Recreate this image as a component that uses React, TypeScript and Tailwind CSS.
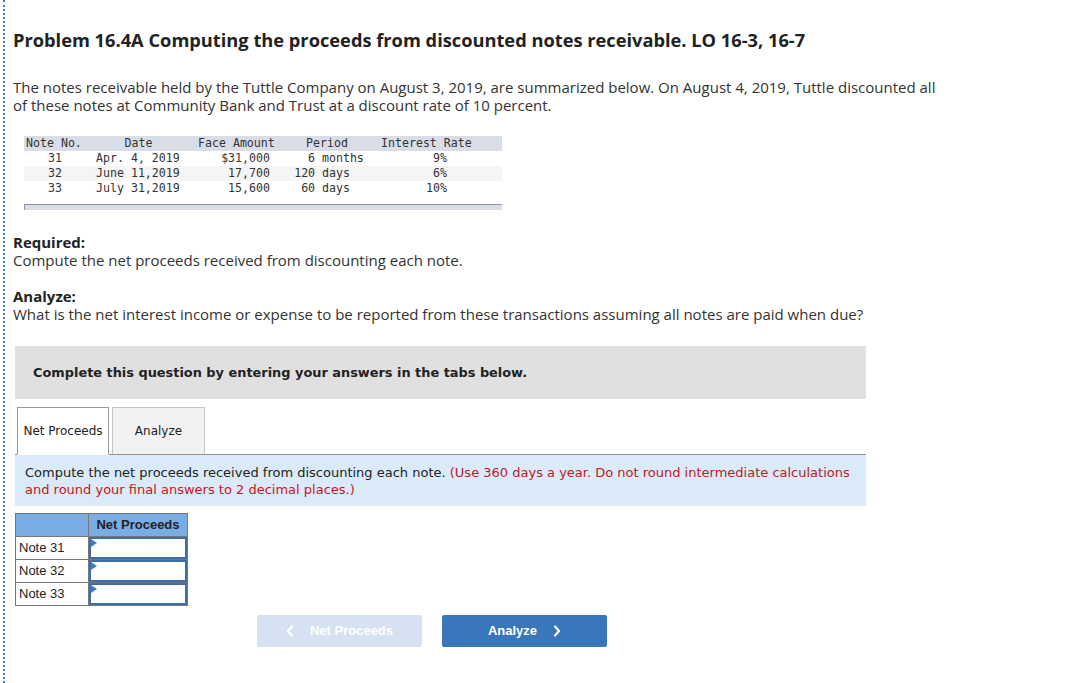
const notes = [
  { no: '31', date: 'Apr. 4, 2019', face: '$31,000', period: '6 months', rate: '9%' },
  { no: '32', date: 'June 11,2019', face: '17,700', period: '120 days', rate: '6%' },
  { no: '33', date: 'July 31,2019', face: '15,600', period: '60 days', rate: '10%' },
];

const answerRows = ['Note 31', 'Note 32', 'Note 33'];

const sans = "font-['Open_Sans','Lato',sans-serif]";
const cols = 'grid grid-cols-[66px_100px_92px_88px_132px]';

function NotesTable() {
  return (
    <div className="ml-[11px] mt-[22px] w-[478px] font-['DejaVu_Sans_Mono','Liberation_Mono',monospace] text-[11.6px] leading-[15px] text-[#333]">
      <div className={`${cols} h-[15px] bg-[#d9dde8]`}>
        <span className="pl-[2px]">Note No.</span>
        <span className="text-center pr-[3px]">Date</span>
        <span className="pl-[8px]">Face Amount</span>
        <span className="pl-[24px]">Period</span>
        <span className="pl-[11px]">Interest Rate</span>
      </div>
      {notes.map((n, i) => (
        <div key={n.no} className={`${cols} h-[15px] ${i === 1 ? 'bg-[#f5f5f5]' : 'bg-white'}`}>
          <span className="text-right pr-[28px]">{n.no}</span>
          <span className="pl-[6px]">{n.date}</span>
          <span className="text-right pr-[12px]">{n.face}</span>
          <span className={i === 0 ? 'pl-[26px]' : 'text-right pr-[20px]'}>{n.period}</span>
          <span className="text-right pr-[55px]">{n.rate}</span>
        </div>
      ))}
      <div className="mt-[8px] h-[6px] bg-[#d9dde8] border-t border-l border-[#8f959e]" />
    </div>
  );
}

function Chevron({ dir }: { dir: 'left' | 'right' }) {
  return (
    <svg width="8" height="12" viewBox="0 0 8 12" fill="none">
      <path
        d={dir === 'left' ? 'M6 1.5 L2 6 L6 10.5' : 'M2 1.5 L6 6 L2 10.5'}
        stroke="currentColor"
        strokeWidth="2.2"
        strokeLinecap="round"
        strokeLinejoin="round"
      />
    </svg>
  );
}

function AnswerTable() {
  return (
    <table className="mt-[7px] border-collapse font-['Liberation_Sans',Arial,sans-serif] text-[13px] text-[#222]">
      <thead>
        <tr className="h-[23px] bg-[#7aade6]">
          <th className="w-[73px] border border-[#777]"></th>
          <th className="w-[99px] border border-[#777] font-bold text-[#222] text-center">Net Proceeds</th>
        </tr>
      </thead>
      <tbody>
        {answerRows.map((r) => (
          <tr key={r} className="h-[23px]">
            <td className="border border-[#777] pl-[3px] text-left">{r}</td>
            <td className="border border-[#777] p-0">
              <div className="relative h-[22px] border-2 border-[#3c6ea9] bg-white">
                <span className="absolute left-0 top-0 w-0 h-0 border-t-[4px] border-b-[4px] border-l-[6px] border-t-transparent border-b-transparent border-l-[#3c7cc9]" />
              </div>
            </td>
          </tr>
        ))}
      </tbody>
    </table>
  );
}

export default function App() {
  return (
    <div className="min-h-[683px] bg-white">
      <div className="ml-[3px] min-h-[683px] border-l-2 border-dotted border-[#3a7bd5] pl-[8px] pt-[29px]">
        <h1 className={`${sans} text-[18.25px] font-bold leading-[22px] text-[#222]`}>
          Problem 16.4A Computing the proceeds from discounted notes receivable. LO 16-3, 16-7
        </h1>

        <p className={`${sans} mt-[27px] text-[15px] leading-[18px] text-[#333] w-[930px]`}>
          The notes receivable held by the Tuttle Company on August 3, 2019, are summarized below. On August 4, 2019, Tuttle discounted all of these notes at Community Bank and Trust at a discount rate of 10 percent.
        </p>

        <NotesTable />

        <div className={`${sans} mt-[23px] text-[15px] leading-[18px] text-[#333]`}>
          <p className="font-bold text-[#222]">Required:</p>
          <p>Compute the net proceeds received from discounting each note.</p>
          <p className="mt-[18px] font-bold text-[#222]">Analyze:</p>
          <p>What is the net interest income or expense to be reported from these transactions assuming all notes are paid when due?</p>
        </div>

        <div className="ml-[2px] mt-[23px] w-[851px]">
          <div className="h-[53px] bg-[#e0e0e0] flex items-center pl-[18px] font-['DejaVu_Sans','Verdana',sans-serif] text-[12.9px] font-bold text-[#222]">
            Complete this question by entering your answers in the tabs below.
          </div>

          <div className="mt-[8px] flex items-end pl-[2px] border-b border-[#8f959e] font-['DejaVu_Sans','Verdana',sans-serif] text-[12px] text-[#222]">
            <div className="h-[48px] -mb-px w-[92px] flex items-center justify-center bg-white border border-[#999] border-b-white">
              Net Proceeds
            </div>
            <div className="ml-[3px] h-[47px] w-[93px] flex items-center justify-center bg-[#f2f2f2] border border-[#c4c4c4] border-b-0">
              Analyze
            </div>
          </div>

          <div className="h-[51px] bg-[#dbeaf8] px-[10px] pt-[9px] font-['DejaVu_Sans','Verdana',sans-serif] text-[13px] leading-[17px] text-[#222]">
            Compute the net proceeds received from discounting each note.{' '}
            <span className="text-[#c4161c]">
              (Use 360 days a year. Do not round intermediate calculations and round your final answers to 2 decimal places.)
            </span>
          </div>

          <AnswerTable />

          <div className="mt-[9px] ml-[242px] flex gap-[20px] font-['Liberation_Sans',Arial,sans-serif] text-[13px] font-bold text-white">
            <button className="h-[32px] w-[165px] rounded-[2px] bg-[#d6e2f1] flex items-center justify-center gap-[16px]">
              <Chevron dir="left" />
              <span>Net Proceeds</span>
            </button>
            <button className="h-[32px] w-[165px] rounded-[2px] bg-[#3a76ba] flex items-center justify-center gap-[16px]">
              <span>Analyze</span>
              <Chevron dir="right" />
            </button>
          </div>
        </div>
      </div>
    </div>
  );
}
